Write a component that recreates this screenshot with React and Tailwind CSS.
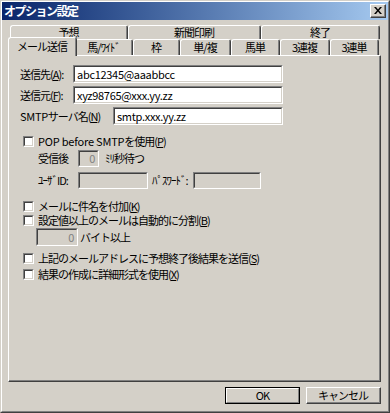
import React from 'react';

const Sunken = ({ className = '', inner = 'bg-white', children }) => (
  <div className={`border border-t-[#808080] border-l-[#808080] border-r-white border-b-white ${className}`}>
    <div className={`h-full border border-t-[#404040] border-l-[#404040] border-r-[#d4d0c8] border-b-[#d4d0c8] flex items-center px-[2px] tracking-[-0.3px] ${inner}`}>
      {children}
    </div>
  </div>
);

const Check = ({ children, className = '' }) => (
  <div className={`flex items-center h-[14px] ${className}`}>
    <div className="ml-[3px] w-[11px] h-[11px] border border-t-[#808080] border-l-[#808080] border-r-white border-b-white">
      <div className="h-full border border-t-[#404040] border-l-[#404040] border-r-[#d4d0c8] border-b-[#d4d0c8] bg-white" />
    </div>
    <span className="ml-[4px] whitespace-nowrap">{children}</span>
  </div>
);

const BackTab = ({ className = '', children }) => (
  <div className={`h-full border-t border-l border-r border-t-white border-l-white border-r-[#404040] rounded-t-[3px] ${className}`}>
    <div className="h-full border-r border-r-[#808080] flex items-center justify-center pb-[1px] whitespace-nowrap">{children}</div>
  </div>
);

export default function App() {
  return (
    <div className="w-[390px] h-[413px] bg-[#d4d0c8] border border-t-[#d4d0c8] border-l-[#d4d0c8] border-r-[#404040] border-b-[#404040] font-['Noto_Sans_CJK_JP','Noto_Sans',sans-serif] text-[11px] leading-none tracking-[-1px] text-black overflow-hidden">
      <div className="h-full border border-t-white border-l-white border-r-[#808080] border-b-[#808080] flex flex-col">
        {/* title bar */}
        <div className="h-[18px] shrink-0 bg-linear-to-r from-[#0a246a] to-[#a6caf0] flex items-center justify-between pl-[2px] pr-[2px]">
          <span className="text-white font-bold text-[12px] tracking-[-1.5px]">オプション設定</span>
          <div className="w-[16px] h-[14px] border border-t-white border-l-white border-r-[#404040] border-b-[#404040] bg-[#d4d0c8]">
            <div className="h-full border-r border-b border-r-[#808080] border-b-[#808080] flex items-center justify-center">
              <svg width="8" height="7" viewBox="0 0 8 7">
                <path d="M0 0h2l2 2.5L6 0h2L5 3.5 8 7H6L4 4.5 2 7H0l3-3.5z" fill="#000" />
              </svg>
            </div>
          </div>
        </div>

        <div className="ml-[6px] mt-[5px] w-[373px] flex flex-col">
          {/* back row */}
          <div className="flex h-[14px] pl-[2px]">
            <BackTab className="w-[118px]">予想</BackTab>
            <BackTab className="w-[133px]">新聞印刷</BackTab>
            <BackTab className="w-[119px]">終了</BackTab>
          </div>
          {/* front row */}
          <div className="flex items-end h-[16px] pl-[2px]">
            <div className="relative z-10 w-[69px] h-[19px] -mx-[2px] -mb-[1px] bg-[#d4d0c8] border-t border-l border-r border-t-white border-l-white border-r-[#404040] rounded-t-[3px]">
              <div className="h-full border-r border-r-[#808080] flex items-center justify-center pb-[1px]">メール送信</div>
            </div>
            <BackTab className="w-[58px]">馬/ﾜｲﾄﾞ</BackTab>
            <BackTab className="w-[47px]">枠</BackTab>
            <BackTab className="w-[51px]">単/複</BackTab>
            <BackTab className="w-[49px]">馬単</BackTab>
            <BackTab className="w-[50px]">3連複</BackTab>
            <BackTab className="w-[49px]">3連単</BackTab>
          </div>

          {/* panel */}
          <div className="h-[327px] border border-t-white border-l-white border-r-[#404040] border-b-[#404040]">
            <div className="h-full border-r border-b border-r-[#808080] border-b-[#808080] pl-[11px] pt-[9px] flex flex-col">
              <div className="flex items-center h-[18px]">
                <span className="w-[53px] whitespace-nowrap">送信先(<u>A</u>):</span>
                <Sunken className="w-[210px] h-[18px]">abc12345@aaabbcc</Sunken>
              </div>
              <div className="flex items-center h-[18px] mt-[3px]">
                <span className="w-[53px] whitespace-nowrap">送信元(<u>F</u>):</span>
                <Sunken className="w-[210px] h-[18px]">xyz98765@xxx.yy.zz</Sunken>
              </div>
              <div className="flex items-center h-[18px] mt-[3px]">
                <span className="w-[93px] whitespace-nowrap"><span className="tracking-[-0.3px]">SMTP</span>サーバ名(<u>N</u>)</span>
                <Sunken className="w-[170px] h-[18px]">smtp.xxx.yy.zz</Sunken>
              </div>

              <Check className="mt-[9px]"><span className="tracking-[-0.2px]">POP before SMTP</span>を使用(<u>P</u>)</Check>
              <div className="flex items-center h-[17px] mt-[2px] pl-[18px]">
                <span className="w-[40px] whitespace-nowrap">受信後</span>
                <Sunken className="w-[21px] h-[17px]" inner="bg-[#d4d0c8] justify-end">
                  <span className="text-[#808080]">0</span>
                </Sunken>
                <span className="ml-[6px] whitespace-nowrap">ﾐﾘ秒待つ</span>
              </div>
              <div className="flex items-center h-[17px] mt-[5px] pl-[18px]">
                <span className="w-[40px] whitespace-nowrap">ﾕｰｻﾞID:</span>
                <Sunken className="w-[70px] h-[17px]" inner="bg-[#d4d0c8]" />
                <span className="w-[45px] pl-[4px] whitespace-nowrap">ﾊﾟｽﾜｰﾄﾞ:</span>
                <Sunken className="w-[68px] h-[17px]" inner="bg-[#d4d0c8]" />
              </div>

              <Check className="mt-[10px]">メールに件名を付加(<u>K</u>)</Check>
              <Check>設定値以上のメールは自動的に分割(<u>B</u>)</Check>
              <div className="flex items-center h-[18px] mt-[1px] pl-[16px]">
                <Sunken className="w-[42px] h-[18px]" inner="bg-[#d4d0c8] justify-end">
                  <span className="text-[#808080]">0</span>
                </Sunken>
                <span className="ml-[2px] whitespace-nowrap">バイト以上</span>
              </div>
              <Check className="mt-[5px]">上記のメールアドレスに予想終了後結果を送信(<u>S</u>)</Check>
              <Check className="mt-[2px]">結果の作成に詳細形式を使用(<u>X</u>)</Check>
            </div>
          </div>

          {/* buttons */}
          <div className="flex justify-end gap-[6px] mt-[5px]">
            <div className="w-[75px] h-[17px] border border-black">
              <div className="h-full border border-t-white border-l-white border-r-[#808080] border-b-[#808080] flex items-center justify-center">OK</div>
            </div>
            <div className="w-[75px] h-[17px] border border-t-white border-l-white border-r-[#404040] border-b-[#404040]">
              <div className="h-full border-r border-b border-r-[#808080] border-b-[#808080] flex items-center justify-center">キャンセル</div>
            </div>
          </div>
        </div>
      </div>
    </div>
  );
}
